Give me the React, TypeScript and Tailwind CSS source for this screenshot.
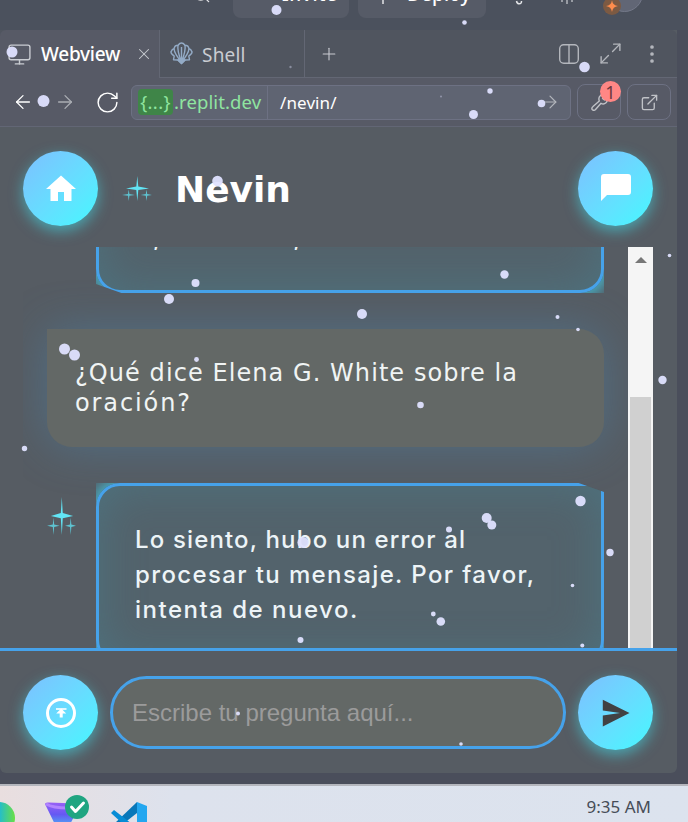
import React from 'react';
import { ArrowLeft, ArrowRight, ExternalLink, Monitor, MoreVertical, Plus, RotateCw, Search, UserPlus, X, Maximize2 } from 'lucide-react';
import { MdHome } from 'react-icons/md';

const flakes: [number, number, number][] = [
  [276.5, 10, 5], [464.5, 22.5, 2.3], [12, 52, 5.5], [584.5, 67, 5.3], [43.5, 101, 6],
  [490, 91, 2.7], [441, 96.5, 1], [473.5, 114.5, 4.5], [541.5, 103.5, 3.8], [290.5, 67, 1.2],
  [217.5, 181, 5.3], [195.5, 283, 4], [169, 299, 5], [504.5, 274.5, 4.2], [362, 314, 5],
  [669.5, 255.5, 1.8], [557.5, 317, 2], [578, 329.5, 1.8], [64.5, 349, 5.5], [74.5, 355, 5.5],
  [196.5, 359.5, 2.4], [420.5, 405, 3.3], [662.5, 380, 4.2], [24.5, 448.5, 2.7], [580.5, 501, 5.2],
  [486.7, 518, 5], [491.8, 525, 4.5], [449, 529.5, 3], [303, 542.5, 5.6], [610, 552.5, 3.7],
  [572.5, 585.5, 1.8], [433.3, 614, 2.4], [440.8, 621.5, 4.3], [300.5, 640, 3], [582.3, 645.5, 2],
  [238, 713.5, 2], [461, 744, 1.8],
];

function Snow() {
  return (
    <svg className="pointer-events-none absolute inset-0" width="688" height="822">
      {flakes.map(([x, y, r], i) => (
        <circle key={i} cx={x} cy={y} r={r} fill="#dfe1ff" opacity={r < 1.5 ? 0.4 : 0.95} />
      ))}
    </svg>
  );
}

function Sparkles({ className }: { className: string }) {
  return (
    <svg viewBox="0 0 30 26" preserveAspectRatio="none" className={className} fill="#62e5f5">
      <path d="M15.3 0 L16.3 11 L27 13 L16.3 14.5 L15.3 26 L14.3 14.5 L4 13 L14.3 11Z" />
      <path opacity=".75" d="M6.7 14 L7.4 18.8 L13 19.7 L7.4 20.6 L6.7 26 L6 20.6 L0 19.7 L6 18.8Z" />
      <path opacity=".75" d="M24.5 14 L25.2 18.8 L30 19.7 L25.2 20.6 L24.5 26 L23.8 20.6 L18.7 19.7 L23.8 18.8Z" />
    </svg>
  );
}

function RoundButton({ children }: { children: React.ReactNode }) {
  return (
    <button className="flex size-[75px] shrink-0 items-center justify-center rounded-full bg-linear-135 from-[#7cbfff] to-[#40f8ff] text-white shadow-[0_5px_14px_rgba(64,232,245,0.52)]">
      {children}
    </button>
  );
}

function TopBar() {
  return (
    <div className="relative h-[30px] overflow-hidden bg-[#4b515d] font-['Noto_Sans',sans-serif] text-white">
      <div className="flex h-[18px] items-end pl-[192px]">
        <Search size={19} strokeWidth={1.6} className="mb-[14px] shrink-0 text-[#e4e5e8]" />
        <div className="ml-[22px] flex h-[40px] w-[116px] shrink-0 items-center rounded-lg bg-[#565b67] pl-3">
          <svg width="20" height="12" className="shrink-0" fill="none" stroke="#e4e5e8" strokeWidth="1.5"><path d="M1.500 8V5M16.800 8V5" /></svg>
          <span className="-mt-[9px] ml-[17px] text-[19px] leading-6 font-medium tracking-[0.6px]">Invite</span>
        </div>
        <div className="ml-[9px] flex h-[40px] w-[128px] shrink-0 items-center rounded-lg bg-[#565b67] pl-4">
          <svg width="18" height="18" className="-mt-[4px] shrink-0" fill="none" stroke="#e4e5e8" strokeWidth="1.5"><path d="M9 17V2M4 7l5-5 5 5" /></svg>
          <span className="-mt-[9px] ml-[15px] text-[19px] leading-6 font-medium tracking-[0.1px]">Deploy</span>
        </div>
      </div>
      <svg className="absolute top-0 left-[500px]" width="150" height="18">
        <path d="M16.500 1q.5 2.800 2.800 2.800T21.500 1" fill="none" stroke="#e4e5e8" strokeWidth="1.5" />
        <path d="M62 0v2M67 0v4M72 0v2" fill="none" stroke="#b9bcc2" strokeWidth="1.4" />
        <circle cx="124.500" cy="-6.500" r="18" fill="#616675" stroke="#747989" />
        <circle cx="112" cy="6" r="9" fill="#7c5a43" />
        <path d="M112 .2Q112.700 5.300 118 6Q112.700 6.700 112 12Q111.300 6.700 106 6Q111.300 5.300 112 .2Z" fill="#ff8d4d" />
      </svg>
    </div>
  );
}

function ShellIcon() {
  return (
    <svg width="23" height="23" viewBox="0 0 23 23" fill="none" stroke="#93abc6" strokeWidth="1.4" strokeLinejoin="round">
      <path d="M11.500 21.500 7.800 18 3.500 17.700 4.200 14 Q.2 11 1.200 9.500 Q2 7 4 6.800 Q4.500 3.300 8 3.200 Q11.500-1.200 15 3.200 Q18.500 3.300 19 6.800 Q21 7 21.800 9.500 Q22.800 11 18.800 14L19.500 17.700 15.200 18Z" />
      <path d="M11.500 20 Q4.500 12 4 6.800M11.500 20 Q7 9 8 3.200M11.500 20 Q16 9 15 3.200M11.500 20 Q18.500 12 19 6.800M11.500 19V5" />
      <path d="M8 18l3.500-2 3.500 2-3.500 3.500Z" fill="#93abc6" />
    </svg>
  );
}

function Tabs() {
  return (
    <div className="flex h-12 rounded-tr-md bg-[#50555f] font-['Noto_Sans',sans-serif] text-[19px] text-[#c9ccd2]">
      <div className="flex w-[160px] shrink-0 items-center rounded-tl-md border-r border-[#636774] bg-[#575a66] pl-[7px]">
        <Monitor size={25} strokeWidth={1.35} className="shrink-0" />
        <span className="mt-px ml-[9px] w-[80px] font-medium tracking-[-0.25px] whitespace-nowrap text-white">Webview</span>
        <X size={18} strokeWidth={1.4} className="ml-[14px] shrink-0" />
      </div>
      <div className="flex w-[145px] shrink-0 items-center border-r border-b border-[#636774] pl-[10px]">
        <ShellIcon />
        <span className="mt-[3px] ml-[9px] tracking-[0.2px]">Shell</span>
      </div>
      <div className="flex grow items-center border-b border-[#636774] pl-[14px]">
        <Plus size={20} strokeWidth={1.3} />
        <svg width="20" height="20" viewBox="0 0 20 20" className="ml-auto" fill="none" stroke="#b3b6bc" strokeWidth="1.4">
          <rect x=".7" y=".7" width="18.600" height="18.600" rx="4" /><path d="M10 1v18" />
        </svg>
        <Maximize2 size={25} strokeWidth={1.35} className="ml-[19px] text-[#b3b6bc]" />
        <MoreVertical size={24} strokeWidth={1.7} className="mr-[13px] ml-[17px] text-[#b3b6bc]" />
      </div>
    </div>
  );
}

function AddressBar() {
  return (
    <div className="flex h-[49px] items-center border-b border-[#626675] bg-[#575a66] pl-3 font-['Noto_Sans',sans-serif] text-white">
      <ArrowLeft size={22} strokeWidth={1.4} className="shrink-0" />
      <ArrowRight size={22} strokeWidth={1.4} className="ml-[20px] shrink-0 text-[#aaadb3]" />
      <RotateCw size={25} strokeWidth={1.4} className="ml-[19px] shrink-0" />
      <div className="ml-[11px] flex h-[35px] w-[440px] shrink-0 items-center rounded-md border border-[#6d7183] bg-[#5f6472] pl-[6px] whitespace-nowrap">
        <span className="flex h-[26px] w-[35px] items-center justify-center rounded bg-[#3f8548] text-[18.500px] tracking-[0.3px] text-[#8fe5a0]">{'{...}'}</span>
        <span className="w-[94px] pl-[1px] text-[18.500px] tracking-[0.1px] text-[#8fe5a0]">.replit.dev</span>
        <span className="h-[33px] border-l border-[#6d7183] pl-3 text-[17px] leading-[33px] tracking-[0.1px]">/nevin/</span>
        <ArrowRight size={20} strokeWidth={1.4} className="mr-[10px] ml-auto text-[#b3b6bc]" />
      </div>
      <div className="relative ml-[6px] flex h-[36px] w-[44px] shrink-0 items-center justify-center rounded-lg border border-[#6d7183]">
        <svg width="17" height="17" viewBox="0 0 17 17" fill="none" stroke="#c0c2c7" strokeWidth="1.400" strokeLinejoin="round">
          <path d="M2 12.500 8.300 7Q7 3.500 9.500 1.500 11-.2 13 .8L11.500 4.500 13.500 6 16.200 4Q17 7 15 8.800 12.700 10.800 10 9.300L4.300 15.700Q2.700 17 1.200 15.500.2 14 2 12.500Z" />
        </svg>
        <span className="absolute -top-[4px] -right-[1px] flex size-[21px] items-center justify-center rounded-full bg-[#ff8785] text-[18px] leading-none text-[#6d383e]">1</span>
      </div>
      <div className="ml-[6px] flex h-[36px] w-[44px] shrink-0 items-center justify-center rounded-lg border border-[#6d7183]">
        <ExternalLink size={19} strokeWidth={1.7} className="text-[#c0c2c7]" />
      </div>
    </div>
  );
}

function BotCard({ children }: { children: React.ReactNode }) {
  return (
    <div className="h-[181px] w-[508px] shrink-0 [clip-path:polygon(0_0,95%_0,100%_5%,100%_100%,5%_100%,0_95%)]">
      <div className="h-full w-full rounded-[24px] rounded-tr-none shadow-[0_0_14px_5px_rgba(67,190,215,0.85)]">
        <div className="h-full w-full rounded-[24px] rounded-tr-none border-[3px] border-[#46a2ea] bg-[#53636c] px-9 pt-[36px] font-['Inter',sans-serif] text-[24px] leading-[35px] font-medium text-[#edf4f7] shadow-[inset_0_0_45px_rgba(72,135,150,0.45)]">
          {children}
        </div>
      </div>
    </div>
  );
}

function Chat() {
  return (
    <div className="ml-[23px] flex h-[401px] w-[630px] overflow-hidden">
      <div className="flex h-full w-[605px] shrink-0 flex-col overflow-hidden pl-6">
        <div className="-mt-[135px] ml-[49px]">
          <BotCard>
            <div className="flex pt-[69px] leading-[35px]"><span className="ml-[18px]">,</span><span className="ml-[133px]">,</span></div>
          </BotCard>
        </div>
        <div className="mt-[36px] h-[118px] w-[557px] shrink-0 rounded-[25px] rounded-tl-none bg-[#636866] pt-[29px] pl-[28px] font-['DejaVu_Sans',sans-serif] text-[24px] leading-[30px] whitespace-nowrap text-[#f0f4f4] shadow-[0_0_45px_rgba(76,135,175,0.45)]">
          <p className="tracking-[1.070px]">¿Qué dice Elena G. White sobre la</p>
          <p className="tracking-[1.900px]">oración?</p>
        </div>
        <div className="mt-[36px] flex">
          <Sparkles className="mt-[14px] mr-5 h-[38px] w-[29px] shrink-0" />
          <BotCard>
            <p className="tracking-[1.150px] whitespace-nowrap">Lo siento, hubo un error al</p>
            <p className="tracking-[1.380px] whitespace-nowrap">procesar tu mensaje. Por favor,</p>
            <p className="tracking-[1.500px] whitespace-nowrap">intenta de nuevo.</p>
          </BotCard>
        </div>
      </div>
      <div className="relative flex w-[25px] shrink-0 flex-col items-center bg-[#f5f5f5]">
        <div className="mt-[10px] h-0 w-0 border-x-[6px] border-b-[6px] border-x-transparent border-b-[#777]" />
        <div className="mt-[134px] w-[21px] grow bg-[#d0d0d0]" />
      </div>
    </div>
  );
}

function Composer() {
  return (
    <div className="flex h-[125px] items-start border-t-[3px] border-[#46a2ea] px-[23px] pt-6">
      <RoundButton>
        <svg width="30" height="30" fill="none" stroke="#fff">
          <circle cx="15" cy="15" r="13.500" strokeWidth="3" />
          <path d="M10 11h10.500" strokeWidth="1.600" /><path d="M15.200 10.500l5 5H16.700v4h-3v-4H10.200Z" fill="#fff" stroke="none" />
        </svg>
      </RoundButton>
      <input placeholder="Escribe tu pregunta aquí..." className="mt-px ml-3 h-[73px] w-[456px] rounded-full border-[3px] border-[#46a2ea] bg-[#636866] px-[19px] font-['Liberation_Sans',sans-serif] text-[24px] outline-none placeholder:text-[#9b9b9b]" />
      <div className="ml-3">
        <RoundButton>
          <svg width="28" height="28" fill="#414143"><path d="M.8 .8 27.500 14 .8 27.500V16.500L18 14 .8 11.500Z" /></svg>
        </RoundButton>
      </div>
    </div>
  );
}

function Taskbar() {
  return (
    <div className="flex h-[38px] items-start justify-between border-t-2 border-[#b4b6bd] bg-linear-to-r from-[#e9dedf] via-[#dde2ed] via-25% to-[#dce3ee]">
      <svg width="160" height="36" viewBox="0 786 160 36">
        <defs>
          <linearGradient id="edge"><stop stopColor="#22bcd0" /><stop offset=".5" stopColor="#22bcd0" /><stop offset="1" stopColor="#69df45" /></linearGradient>
          <linearGradient id="funnel" x2="0" y2="1"><stop stopColor="#9a60f5" /><stop offset=".5" stopColor="#6558f3" /><stop offset="1" stopColor="#4cb3f4" /></linearGradient>
        </defs>
        <circle cx="-1" cy="818" r="16" fill="url(#edge)" />
        <path d="M45 804q0-2 4-1.500l27 1 2 5-9 18H56Z" fill="url(#funnel)" />
        <path d="M46 804q7 4 22 4" fill="none" stroke="#b284ff" strokeWidth="3" />
        <circle cx="77" cy="807" r="12" fill="#20a581" />
        <path d="m71.500 807 4 4.500 8-8.500" fill="none" stroke="#fff" strokeWidth="3" strokeLinecap="round" strokeLinejoin="round" />
        <path d="m137 802 10 4v18h-10Z" fill="#23a7f0" />
        <path d="m137 802-23 22h9l14-11Z" fill="#0877b9" />
        <path d="m111 813 3-3 18 14h-9Z" fill="#078dd6" />
      </svg>
      <span className="mt-[9px] mr-[37px] font-['Noto_Sans',sans-serif] text-[17px] leading-6 text-[#474d57]">9:35 AM</span>
    </div>
  );
}

export default function App() {
  return (
    <div className="relative h-[822px] w-[688px] overflow-hidden bg-[#4a4e5b]">
      <TopBar />
      <div className="mb-[11px] h-[743px] w-[677px] overflow-hidden rounded-b-md bg-[#565c63]">
        <Tabs />
        <AddressBar />
        <header className="flex h-[120px] items-center pt-[3px] pr-6 pl-[23px]">
          <RoundButton><MdHome size={36} /></RoundButton>
          <Sparkles className="ml-6 h-[25px] w-[30px]" />
          <h1 className="ml-[23px] pt-[2px] font-['DejaVu_Sans',sans-serif] text-[36px] leading-none font-bold text-white">Nevin</h1>
          <div className="ml-auto">
            <RoundButton>
              <svg width="30" height="27" fill="#fff" className="-mt-[2px] ml-px"><path d="M3 0h24q3 0 3 3v15q0 3-3 3H6l-6 6V3q0-3 3-3Z" /></svg>
            </RoundButton>
          </div>
        </header>
        <Chat />
        <Composer />
      </div>
      <Taskbar />
      <Snow />
    </div>
  );
}
